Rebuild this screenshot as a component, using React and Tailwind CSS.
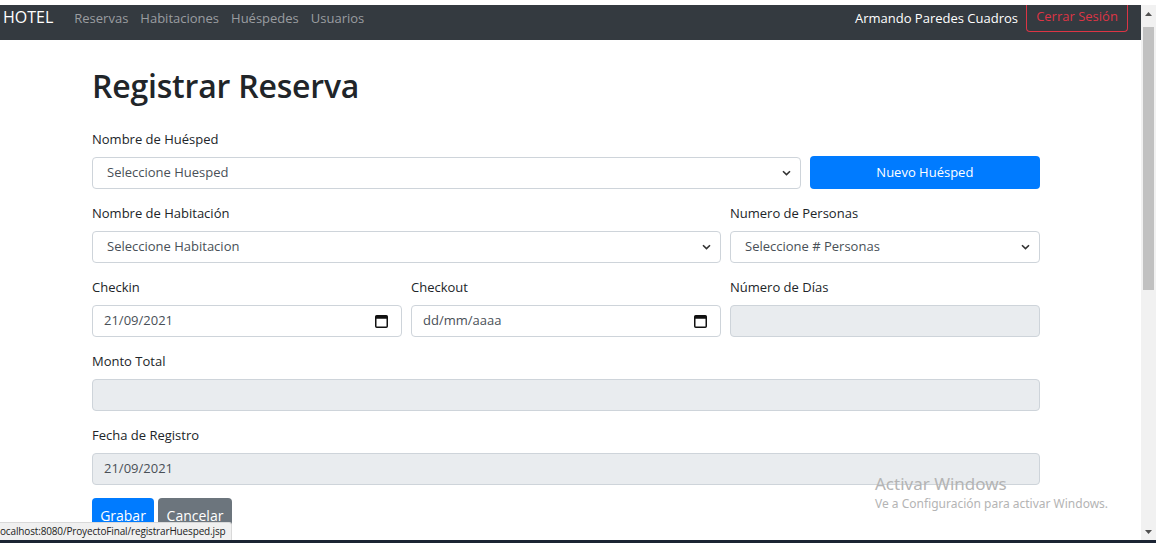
import React from "react";

function Chevron() {
  return (
    <svg width="9" height="6" viewBox="0 0 9 6" className="shrink-0">
      <path d="M1 1.2 L4.5 4.6 L8 1.2" fill="none" stroke="#333" strokeWidth="1.6" />
    </svg>
  );
}

function CalendarIcon() {
  return (
    <svg width="13" height="13" viewBox="0 0 13 13" className="shrink-0">
      <rect x="0.75" y="0.75" width="11.5" height="11.5" rx="1" fill="none" stroke="#111" strokeWidth="1.5" />
      <rect x="0.75" y="0.75" width="11.5" height="3" fill="#111" />
    </svg>
  );
}

function Label({ children }) {
  return <div className="text-[13px] leading-[21px] mb-[7px] text-[#212529]">{children}</div>;
}

function SelectBox({ text }) {
  return (
    <div className="h-[32px] border border-[#ced4da] rounded-[4px] bg-white flex items-center justify-between pl-[14px] pr-[9px] text-[13px] text-[#495057]">
      <span>{text}</span>
      <Chevron />
    </div>
  );
}

function DateBox({ text }) {
  return (
    <div className="h-[32px] border border-[#ced4da] rounded-[4px] bg-white flex items-center justify-between pl-[11px] pr-[13px] text-[13px] text-[#495057]">
      <span>{text}</span>
      <CalendarIcon />
    </div>
  );
}

function Disabled({ text }) {
  return (
    <div className="h-[32px] border border-[#ced4da] rounded-[4px] bg-[#e9ecef] flex items-center pl-[11px] text-[13px] text-[#495057]">
      {text}
    </div>
  );
}

export default function App() {
  return (
    <div className="w-[1156px] h-[543px] overflow-hidden bg-white relative font-['Open_Sans',sans-serif]">
      <div className="h-[5px] bg-white" />
      <div className="flex h-[535px]">
        <div className="w-[1141px] flex flex-col">
          <nav className="h-[35px] bg-[#343a40] flex items-start pl-[3px] pr-[13px]">
            <div className="text-white text-[16px] leading-[24px] mr-[21px]">HOTEL</div>
            <div className="flex text-[13px] leading-[24px] text-[#9a9da0] mt-[1px]">
              <span className="pr-[6px]">Reservas</span>
              <span className="px-[6px]">Habitaciones</span>
              <span className="px-[6px]">Huéspedes</span>
              <span className="px-[6px]">Usuarios</span>
            </div>
            <div className="ml-auto flex items-start">
              <span className="text-white text-[13px] leading-[24px] mt-[1px] mr-[8px]">Armando Paredes Cuadros</span>
              <div className="h-[27px] w-[102px] border-x border-b border-[#dc3545] rounded-b-[4px] text-[#dc3545] text-[13px] flex items-center justify-center pb-[2px]">
                Cerrar Sesión
              </div>
            </div>
          </nav>
          <div className="pl-[92px] w-[1040px]">
            <h1 className="text-[32px] leading-[38px] font-semibold text-[#212529] mt-[27px] mb-[24px] tracking-[-0.2px]">
              Registrar Reserva
            </h1>
            <div className="grid grid-cols-12 gap-x-[9px]">
              <div className="col-span-12"><Label>Nombre de Huésped</Label></div>
              <div className="col-span-9 mb-[14px]"><SelectBox text="Seleccione Huesped" /></div>
              <div className="col-span-3 mb-[14px]">
                <div className="h-[33px] -mt-[1px] bg-[#007bff] rounded-[4px] text-white text-[13px] flex items-center justify-center">Nuevo Huésped</div>
              </div>
              <div className="col-span-8 mb-[14px]">
                <Label>Nombre de Habitación</Label>
                <SelectBox text="Seleccione Habitacion" />
              </div>
              <div className="col-span-4 mb-[14px]">
                <Label>Numero de Personas</Label>
                <SelectBox text="Seleccione # Personas" />
              </div>
              <div className="col-span-4 mb-[14px]">
                <Label>Checkin</Label>
                <DateBox text="21/09/2021" />
              </div>
              <div className="col-span-4 mb-[14px]">
                <Label>Checkout</Label>
                <DateBox text="dd/mm/aaaa" />
              </div>
              <div className="col-span-4 mb-[14px]">
                <Label>Número de Días</Label>
                <Disabled text="" />
              </div>
              <div className="col-span-12 mb-[14px]">
                <Label>Monto Total</Label>
                <Disabled text="" />
              </div>
              <div className="col-span-12 mb-[13px]">
                <Label>Fecha de Registro</Label>
                <Disabled text="21/09/2021" />
              </div>
            </div>
            <div className="flex gap-[4px]">
              <div className="h-[34px] w-[62px] bg-[#007bff] rounded-[4px] text-white text-[14px] flex items-center justify-center">Grabar</div>
              <div className="h-[34px] w-[74px] bg-[#6c757d] rounded-[4px] text-white text-[14px] flex items-center justify-center">Cancelar</div>
            </div>
          </div>
        </div>
        <div className="w-[15px] bg-[#f1f1f1] flex flex-col items-center">
          <div className="h-[17px] flex items-center justify-center">
            <svg width="7" height="4" viewBox="0 0 7 4"><path d="M0 4 L3.5 0 L7 4 Z" fill="#505050" /></svg>
          </div>
          <div className="mt-[5px] w-[11px] h-[263px] bg-[#c1c1c1]" />
          <div className="mt-auto h-[17px] flex items-center justify-center">
            <svg width="7" height="4" viewBox="0 0 7 4"><path d="M0 0 L3.5 4 L7 0 Z" fill="#505050" /></svg>
          </div>
        </div>
      </div>
      <div className="h-[3px] bg-[#1b2433]" />

      <div className="absolute left-[875px] top-[473px] text-[#b4b4b4] font-['Noto_Sans',sans-serif]">
        <div className="text-[17px] leading-[22px]">Activar Windows</div>
        <div className="text-[12px] leading-[16px] mt-[1px]">Ve a Configuración para activar Windows.</div>
      </div>

      <div className="absolute left-0 top-[522px] h-[18px] bg-[#f0f0f0] border-t border-r border-[#d9d9d9] rounded-tr-[3px] text-[10px] tracking-[-0.15px] leading-[17px] text-[#222] pr-[5px] whitespace-nowrap">
        ocalhost:8080/ProyectoFinal/registrarHuesped.jsp
      </div>
    </div>
  );
}
